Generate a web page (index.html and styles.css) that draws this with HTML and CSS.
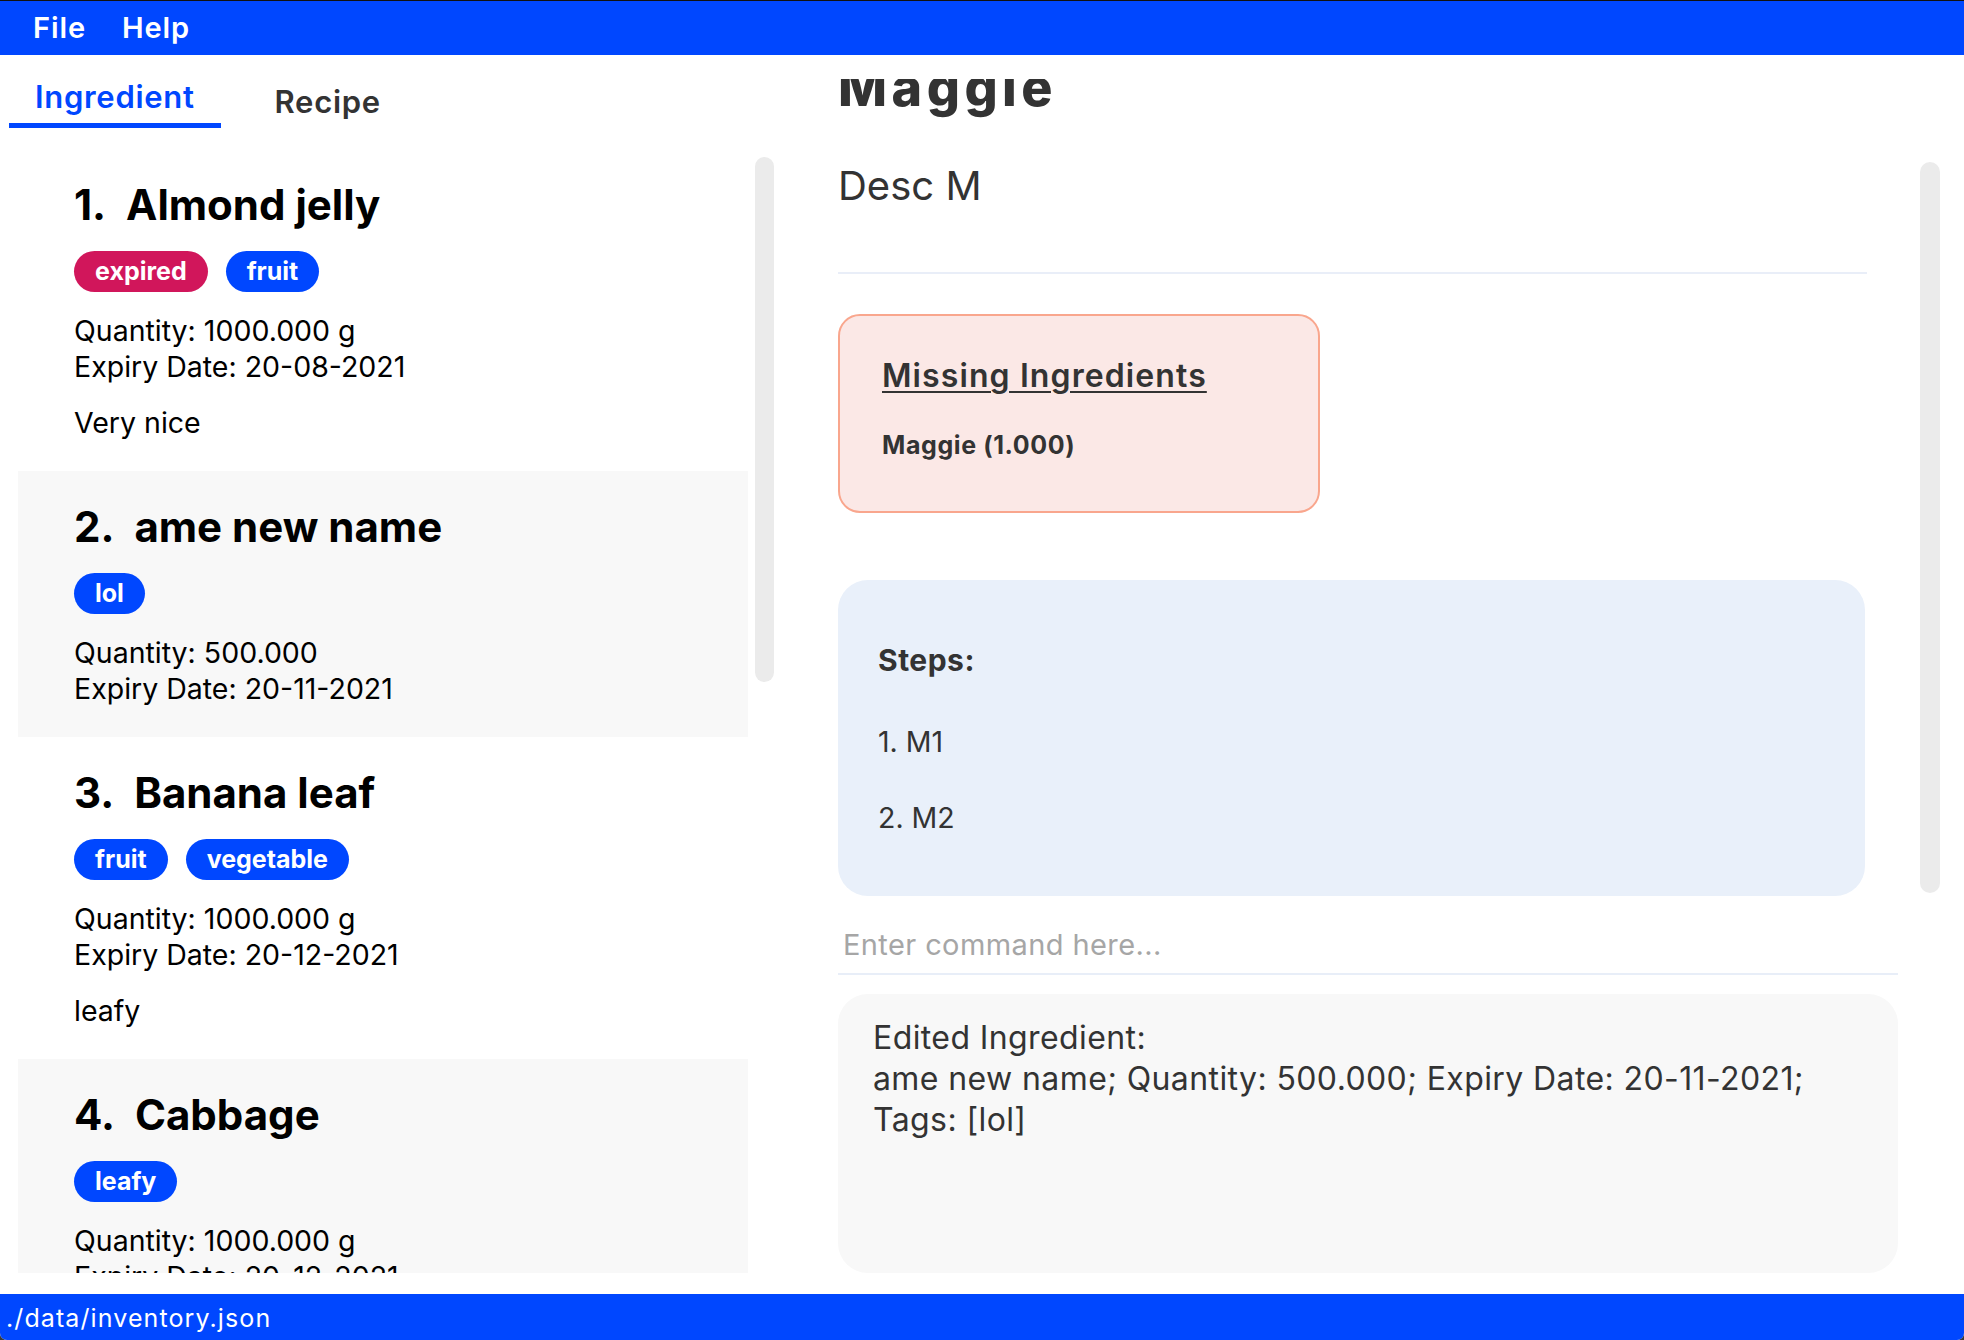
FILE: index.html
```html
<!DOCTYPE html>
<html lang="en">
<head>
<meta charset="utf-8">
<title>Inventory</title>
<link rel="stylesheet" href="styles.css">
</head>
<body>
<div class="app">
  <header class="menubar">
    <span class="menu-item">File</span>
    <span class="menu-item">Help</span>
  </header>
  <main class="main">
    <section class="left">
      <nav class="tabs">
        <div class="tab tab-active">Ingredient</div>
        <div class="tab tab-plain">Recipe</div>
      </nav>
      <div class="list-wrap">
        <div class="list">
          <article class="card">
            <h2 class="card-title">1.&nbsp; Almond jelly</h2>
            <div class="tags"><span class="tag tag-expired">expired</span><span class="tag">fruit</span></div>
            <div class="card-info">
              <div>Quantity: 1000.000 g</div>
              <div>Expiry Date: 20-08-2021</div>
            </div>
            <div class="card-desc">Very nice</div>
          </article>
          <article class="card card-alt">
            <h2 class="card-title">2.&nbsp; ame new name</h2>
            <div class="tags"><span class="tag">lol</span></div>
            <div class="card-info">
              <div>Quantity: 500.000</div>
              <div>Expiry Date: 20-11-2021</div>
            </div>
          </article>
          <article class="card">
            <h2 class="card-title">3.&nbsp; Banana leaf</h2>
            <div class="tags"><span class="tag">fruit</span><span class="tag">vegetable</span></div>
            <div class="card-info">
              <div>Quantity: 1000.000 g</div>
              <div>Expiry Date: 20-12-2021</div>
            </div>
            <div class="card-desc">leafy</div>
          </article>
          <article class="card card-alt">
            <h2 class="card-title">4.&nbsp; Cabbage</h2>
            <div class="tags"><span class="tag">leafy</span></div>
            <div class="card-info">
              <div>Quantity: 1000.000 g</div>
              <div>Expiry Date: 20-12-2021</div>
            </div>
          </article>
        </div>
        <div class="scroll-track"><div class="scroll-thumb thumb-left"></div></div>
      </div>
    </section>
    <section class="right">
      <div class="detail-wrap">
        <div class="detail">
          <div class="detail-inner">
            <h1 class="recipe-name">Maggie</h1>
            <p class="recipe-desc">Desc M</p>
            <div class="sep"></div>
            <div class="missing">
              <div class="missing-title">Missing Ingredients</div>
              <div class="missing-item">Maggie (1.000)</div>
            </div>
            <div class="steps">
              <div class="steps-title">Steps:</div>
              <div class="step step-first">1. M1</div>
              <div class="step">2. M2</div>
            </div>
          </div>
        </div>
        <div class="scroll-track scroll-track-right"><div class="scroll-thumb thumb-right"></div></div>
      </div>
      <input class="command" type="text" placeholder="Enter command here...">
      <div class="result">Edited Ingredient:<br>ame new name; Quantity: 500.000; Expiry Date: 20-11-2021; Tags: [lol]</div>
    </section>
  </main>
  <footer class="statusbar">./data/inventory.json</footer>
</div>
</body>
</html>
```

FILE: styles.css
```css
html {
  background: #3a3a3a;
}
body {
  margin: 0;
  font-family: "Inter", "Liberation Sans", sans-serif;
  color: #000;
}
.app {
  width: 1964px;
  height: 1340px;
  background: #fff;
  display: flex;
  flex-direction: column;
  overflow: hidden;
  border-radius: 0 0 7px 7px;
}

/* menu bar */
.menubar {
  box-sizing: border-box;
  height: 55px;
  border-top: 1px solid #111;
  background: #0047ff;
  display: flex;
  gap: 36px;
  padding-left: 33px;
  line-height: 54px;
  font-size: 29px;
  font-weight: 600;
  letter-spacing: 0.9px;
  color: #fff;
  flex: none;
}

.main {
  display: flex;
  height: 1239px;
  flex: none;
}

/* left column */
.left {
  width: 800px;
  flex: none;
  display: flex;
  flex-direction: column;
}
.tabs {
  height: 94px;
  display: flex;
  align-items: flex-start;
  padding-left: 9px;
  flex: none;
}
.tab {
  padding: 22px 26px 6px;
  line-height: 40px;
  font-size: 31px;
  font-weight: 600;
  letter-spacing: 0.7px;
  color: #333;
  border-bottom: 5px solid transparent;
}
.tab-active {
  color: #0047ff;
  border-bottom-color: #0047ff;
}
.tab-plain {
  padding-top: 27px;
  margin-left: 28px;
}
.list-wrap {
  display: flex;
  gap: 7px;
  height: 1124px;
  padding-left: 18px;
  flex: none;
}
.list {
  width: 730px;
  overflow: hidden;
}
.card {
  padding: 31px 56px 30px;
}
.card-alt {
  background: #f8f8f8;
}
.card-title {
  margin: 0;
  font-size: 42px;
  line-height: 50px;
  font-weight: 700;
  color: #000;
}
.tags {
  margin-top: 21px;
  display: flex;
  gap: 18px;
}
.tag {
  height: 41px;
  line-height: 41px;
  padding: 0 21px;
  border-radius: 21px;
  background: #0047ff;
  color: #fff;
  font-size: 25px;
  font-weight: 700;
}
.tag-expired {
  background: #d1165b;
}
.card-info {
  margin-top: 21px;
  font-size: 28.5px;
  line-height: 36px;
}
.card-desc {
  margin-top: 20px;
  font-size: 28.5px;
  line-height: 36px;
}
.scroll-track {
  width: 19px;
  flex: none;
}
.scroll-thumb {
  background: #ebebeb;
  border-radius: 10px;
}
.thumb-left {
  margin-top: 8px;
  height: 525px;
}

/* right column */
.right {
  flex: 1;
  display: flex;
  flex-direction: column;
  padding: 24px 0 21px 38px;
  color: #333;
}
.detail-wrap {
  display: flex;
  gap: 53px;
  height: 827px;
  flex: none;
}
.detail {
  width: 1029px;
  overflow: hidden;
}
.detail-inner {
  margin-top: -20px;
}
.scroll-track-right {
  width: 20px;
}
.thumb-right {
  margin-top: 83px;
  height: 731px;
}
.recipe-name {
  margin: 0;
  font-size: 52px;
  line-height: 58px;
  font-weight: 800;
  letter-spacing: 4.5px;
  color: #333;
}
.recipe-desc {
  margin: 45px 0 0;
  font-size: 40px;
  line-height: 48px;
  font-weight: 400;
}
.sep {
  margin-top: 62px;
  height: 2px;
  background: #e9eef8;
}
.missing {
  box-sizing: border-box;
  margin-top: 40px;
  width: 482px;
  padding: 40px 40px 50px 42px;
  border: 2px solid #f9a68d;
  border-radius: 22px;
  background: #fbe8e6;
}
.missing-title {
  font-size: 32px;
  line-height: 40px;
  font-weight: 600;
  letter-spacing: 1.1px;
  text-decoration: underline;
  text-decoration-thickness: 2px;
  text-underline-offset: 4px;
}
.missing-item {
  margin-top: 33px;
  font-size: 25px;
  line-height: 32px;
  font-weight: 700;
  letter-spacing: 0.6px;
}
.steps {
  box-sizing: border-box;
  margin-top: 67px;
  width: 1027px;
  padding: 61px 40px 60px;
  border-radius: 30px;
  background: #e9f0fa;
}
.steps-title {
  font-size: 30px;
  line-height: 38px;
  font-weight: 700;
  letter-spacing: 0.5px;
}
.step {
  margin-top: 40px;
  font-size: 28.5px;
  line-height: 36px;
}
.step-first {
  margin-top: 45px;
}
.command {
  display: block;
  box-sizing: border-box;
  margin: 10px 0 0;
  width: 1060px;
  height: 59px;
  padding: 0 5px;
  border: none;
  border-bottom: 2px solid #e8eef8;
  background: transparent;
  outline: none;
  font-family: "Inter", "Liberation Sans", sans-serif;
  font-size: 29px;
  letter-spacing: 0.4px;
  color: #333;
}
.command::placeholder {
  color: #a6a6a6;
}
.result {
  box-sizing: border-box;
  margin-top: 19px;
  width: 1060px;
  height: 279px;
  padding: 23px 30px 0 35px;
  border-radius: 30px;
  background: #f8f8f8;
  font-size: 32px;
  line-height: 41px;
  letter-spacing: 0.4px;
  color: #333;
}

/* status bar */
.statusbar {
  box-sizing: border-box;
  height: 46px;
  padding: 3px 0 0 6px;
  line-height: 43px;
  background: #0047ff;
  color: #fff;
  font-size: 25px;
  letter-spacing: 1.1px;
  flex: none;
}
```
